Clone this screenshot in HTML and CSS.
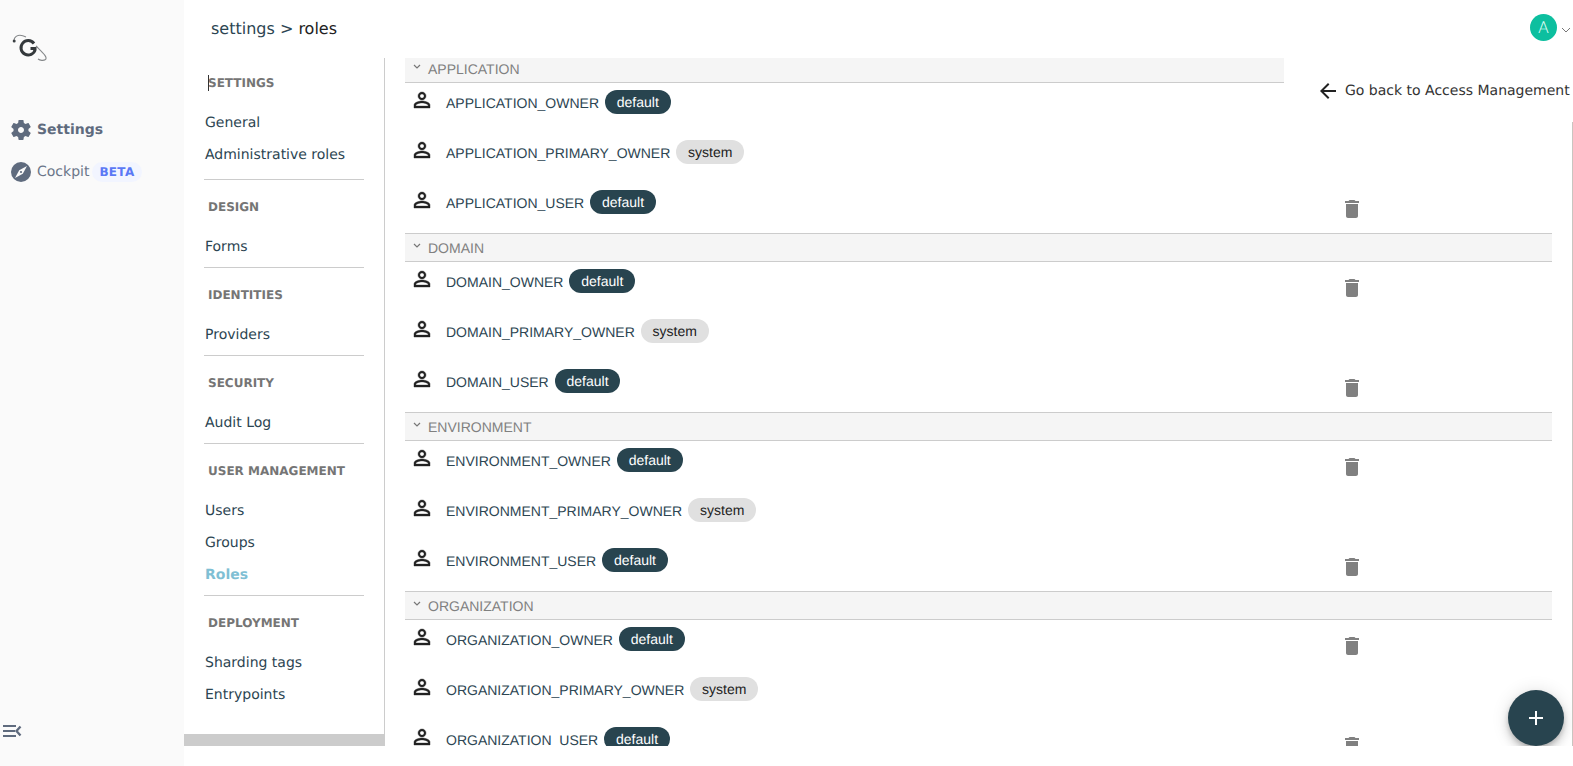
FILE: index.html
```html
<!DOCTYPE html>
<html lang="en">
<head>
<meta charset="utf-8">
<title>settings &gt; roles</title>
<link rel="stylesheet" href="styles.css">
</head>
<body>
<div class="app">
  <aside class="sidebar">
    <a class="logo">
      <svg width="38" height="28" viewBox="0 0 38 28" fill="none">
        <path d="M3 6 C4 1 9 0 15 3 M25 12 C31 18 37 23 34.5 25.5 C32.5 27 29 26.5 27 25" stroke="#85888a" stroke-width="1.1"/>
        <circle cx="3.2" cy="7" r="1.5" fill="#3a3f42"/>
        <path d="M23 9.5 A7.2 7.2 0 1 0 24.2 15.5 M19.5 14.4 H25.5" stroke="#34393c" stroke-width="3"/>
      </svg>
    </a>
    <nav class="side-nav">
      <a class="side-link side-link--active">
        <svg class="side-icon" viewBox="0 0 24 24" fill="#5f6b7e"><path d="M19.43 12.98c.04-.32.07-.64.07-.98s-.03-.66-.07-.98l2.11-1.65c.19-.15.24-.42.12-.64l-2-3.46c-.12-.22-.39-.3-.61-.22l-2.49 1c-.52-.4-1.08-.73-1.69-.98l-.38-2.65C14.46 2.18 14.25 2 14 2h-4c-.25 0-.46.18-.49.42l-.38 2.65c-.61.25-1.17.59-1.69.98l-2.49-1c-.23-.09-.49 0-.61.22l-2 3.46c-.13.22-.07.49.12.64l2.11 1.65c-.04.32-.07.65-.07.98s.03.66.07.98l-2.11 1.65c-.19.15-.24.42-.12.64l2 3.46c.12.22.39.3.61.22l2.49-1c.52.4 1.08.73 1.69.98l.38 2.65c.03.24.24.42.49.42h4c.25 0 .46-.18.49-.42l.38-2.65c.61-.25 1.17-.59 1.69-.98l2.49 1c.23.09.49 0 .61-.22l2-3.46c.12-.22.07-.49-.12-.64l-2.11-1.65zM12 15c-1.66 0-3-1.34-3-3s1.34-3 3-3 3 1.34 3 3-1.34 3-3 3z"/></svg>
        <span>Settings</span>
      </a>
      <a class="side-link">
        <svg class="side-icon" viewBox="0 0 20 20"><circle cx="10" cy="10" r="10" fill="#5f6b7e"/><path d="M16 4 L11.8 11.8 L4 16 L8.2 8.2 Z" fill="#fafafa"/><circle cx="10" cy="10" r="1.1" fill="#5f6b7e"/></svg>
        <span>Cockpit</span>
        <span class="beta">BETA</span>
      </a>
    </nav>
    <button class="collapse" aria-label="Collapse">
      <svg width="20" height="12" viewBox="0 0 20 12" fill="none" stroke="#5f6b7e"><path stroke-width="2" d="M0 1H13M0 6H12M0 11H13"/><path stroke-width="2.3" d="M17.5 1.5L13.5 6L17.5 10.5"/></svg>
    </button>
  </aside>

  <div class="main">
    <header class="topbar">
      <div class="crumbs"><span class="crumb">settings &gt;</span> <span class="crumb-current">roles</span></div>
      <div class="user">
        <span class="avatar">A</span>
        <svg width="10" height="6" viewBox="0 0 10 6" fill="none" stroke="#777" stroke-width="1"><path d="M1 1L5 5L9 1"/></svg>
      </div>
    </header>

    <div class="body">
      <div class="submenu">
        <div class="submenu-list">
          <section class="menu-section menu-section--first">
            <h4 class="menu-title"><span class="caret"></span>SETTINGS</h4>
            <a class="menu-item">General</a>
            <a class="menu-item">Administrative roles</a>
          </section>
          <section class="menu-section">
            <h4 class="menu-title">DESIGN</h4>
            <a class="menu-item">Forms</a>
          </section>
          <section class="menu-section">
            <h4 class="menu-title">IDENTITIES</h4>
            <a class="menu-item">Providers</a>
          </section>
          <section class="menu-section">
            <h4 class="menu-title">SECURITY</h4>
            <a class="menu-item">Audit Log</a>
          </section>
          <section class="menu-section">
            <h4 class="menu-title">USER MANAGEMENT</h4>
            <a class="menu-item">Users</a>
            <a class="menu-item">Groups</a>
            <a class="menu-item menu-item--active">Roles</a>
          </section>
          <section class="menu-section menu-section--last">
            <h4 class="menu-title">DEPLOYMENT</h4>
            <a class="menu-item">Sharding tags</a>
            <a class="menu-item">Entrypoints</a>
          </section>
        </div>
        <div class="hscroll"></div>
      </div>

      <main class="content">
        <div class="roles">
          <a class="back">
            <svg width="24" height="24" viewBox="0 0 24 24" fill="#222"><path d="M20 11H7.83l5.59-5.59L12 4l-8 8 8 8 1.41-1.41L7.83 13H20v-2z"/></svg>
            <span>Go back to Access Management</span>
          </a>

          <section class="group group--first">
            <div class="group-head"><svg class="chev" width="8" height="5" viewBox="0 0 8 5" fill="none" stroke="#777" stroke-width="1.2"><path d="M1 1L4 4L7 1"/></svg>APPLICATION</div>
            <div class="row"><svg class="person" viewBox="0 0 24 24"><use href="#i-person"/></svg><div class="role"><span class="name">APPLICATION_OWNER</span><span class="badge">default</span></div></div>
            <div class="row"><svg class="person" viewBox="0 0 24 24"><use href="#i-person"/></svg><div class="role"><span class="name">APPLICATION_PRIMARY_OWNER</span><span class="badge badge--system">system</span></div></div>
            <div class="row"><svg class="person" viewBox="0 0 24 24"><use href="#i-person"/></svg><div class="role"><span class="name">APPLICATION_USER</span><span class="badge">default</span></div><svg class="trash" viewBox="0 0 24 24"><use href="#i-trash"/></svg></div>
          </section>

          <section class="group">
            <div class="group-head"><svg class="chev" width="8" height="5" viewBox="0 0 8 5" fill="none" stroke="#777" stroke-width="1.2"><path d="M1 1L4 4L7 1"/></svg>DOMAIN</div>
            <div class="row"><svg class="person" viewBox="0 0 24 24"><use href="#i-person"/></svg><div class="role"><span class="name">DOMAIN_OWNER</span><span class="badge">default</span></div><svg class="trash" viewBox="0 0 24 24"><use href="#i-trash"/></svg></div>
            <div class="row"><svg class="person" viewBox="0 0 24 24"><use href="#i-person"/></svg><div class="role"><span class="name">DOMAIN_PRIMARY_OWNER</span><span class="badge badge--system">system</span></div></div>
            <div class="row"><svg class="person" viewBox="0 0 24 24"><use href="#i-person"/></svg><div class="role"><span class="name">DOMAIN_USER</span><span class="badge">default</span></div><svg class="trash" viewBox="0 0 24 24"><use href="#i-trash"/></svg></div>
          </section>

          <section class="group">
            <div class="group-head"><svg class="chev" width="8" height="5" viewBox="0 0 8 5" fill="none" stroke="#777" stroke-width="1.2"><path d="M1 1L4 4L7 1"/></svg>ENVIRONMENT</div>
            <div class="row"><svg class="person" viewBox="0 0 24 24"><use href="#i-person"/></svg><div class="role"><span class="name">ENVIRONMENT_OWNER</span><span class="badge">default</span></div><svg class="trash" viewBox="0 0 24 24"><use href="#i-trash"/></svg></div>
            <div class="row"><svg class="person" viewBox="0 0 24 24"><use href="#i-person"/></svg><div class="role"><span class="name">ENVIRONMENT_PRIMARY_OWNER</span><span class="badge badge--system">system</span></div></div>
            <div class="row"><svg class="person" viewBox="0 0 24 24"><use href="#i-person"/></svg><div class="role"><span class="name">ENVIRONMENT_USER</span><span class="badge">default</span></div><svg class="trash" viewBox="0 0 24 24"><use href="#i-trash"/></svg></div>
          </section>

          <section class="group">
            <div class="group-head"><svg class="chev" width="8" height="5" viewBox="0 0 8 5" fill="none" stroke="#777" stroke-width="1.2"><path d="M1 1L4 4L7 1"/></svg>ORGANIZATION</div>
            <div class="row"><svg class="person" viewBox="0 0 24 24"><use href="#i-person"/></svg><div class="role"><span class="name">ORGANIZATION_OWNER</span><span class="badge">default</span></div><svg class="trash" viewBox="0 0 24 24"><use href="#i-trash"/></svg></div>
            <div class="row"><svg class="person" viewBox="0 0 24 24"><use href="#i-person"/></svg><div class="role"><span class="name">ORGANIZATION_PRIMARY_OWNER</span><span class="badge badge--system">system</span></div></div>
            <div class="row"><svg class="person" viewBox="0 0 24 24"><use href="#i-person"/></svg><div class="role"><span class="name">ORGANIZATION_USER</span><span class="badge">default</span></div><svg class="trash" viewBox="0 0 24 24"><use href="#i-trash"/></svg></div>
          </section>
        </div>
        <button class="fab" aria-label="Add">
          <svg width="24" height="24" viewBox="0 0 24 24" fill="#fff"><path d="M19 13h-6v6h-2v-6H5v-2h6V5h2v6h6v2z"/></svg>
        </button>
      </main>
    </div>
  </div>
</div>

<svg class="defs" width="0" height="0" aria-hidden="true">
  <symbol id="i-person" viewBox="0 0 24 24"><path fill="#222" stroke="#222" stroke-width="0.4" d="M12 5.9c1.16 0 2.1.94 2.1 2.1s-.94 2.1-2.1 2.1S9.9 9.16 9.9 8s.94-2.1 2.1-2.1m0 9c2.97 0 6.1 1.46 6.1 2.1v1.1H5.9V17c0-.64 3.13-2.1 6.1-2.1M12 4C9.79 4 8 5.79 8 8s1.79 4 4 4 4-1.79 4-4-1.79-4-4-4zm0 9c-2.67 0-8 1.34-8 4v3h16v-3c0-2.66-5.33-4-8-4z"/></symbol>
  <symbol id="i-trash" viewBox="0 0 24 24"><path fill="#808080" d="M6 19c0 1.1.9 2 2 2h8c1.1 0 2-.9 2-2V7H6v12zM19 4h-3.5l-1-1h-5l-1 1H5v2h14V4z"/></symbol>
</svg>
</body>
</html>
```
FILE: styles.css
```css
* { box-sizing: border-box; }
html, body { margin: 0; height: 100%; overflow: hidden; background: #fff; }
body { font-family: "DejaVu Sans", sans-serif; font-size: 14px; color: #222; text-rendering: geometricPrecision; }
.defs { position: absolute; }
.app { display: flex; height: 766px; }

/* left rail */
.sidebar { width: 184px; flex: none; background: #fafafa; display: flex; flex-direction: column; padding-top: 34px; }
.logo { display: block; padding-left: 11px; height: 28px; }
.side-nav { display: flex; flex-direction: column; margin-top: 53px; padding-left: 11px; }
.side-link { display: flex; align-items: center; height: 30px; margin-bottom: 12px; color: #6b7689; }
.side-link--active { color: #5f6b7e; font-weight: 700; }
.side-icon { width: 20px; height: 20px; margin-right: 6px; flex: none; }
.side-link--active .side-icon { width: 24px; height: 24px; margin: 0 4px 0 -2px; }
.beta { margin-left: 3px; padding: 0 7px; height: 20px; line-height: 20px; border-radius: 10px; background: #f2f5ff; color: #5a78f5; font-size: 12px; font-weight: 700; letter-spacing: .3px; }
.collapse { margin-top: auto; margin-bottom: 29px; padding: 0 0 0 3px; border: 0; background: none; text-align: left; height: 12px; line-height: 0; }

/* header */
.main { flex: 1; min-width: 0; display: flex; flex-direction: column; padding-bottom: 20px; }
.topbar { height: 58px; flex: none; display: flex; align-items: center; justify-content: space-between; padding: 0 2px 2px 27px; }
.crumbs { font-size: 16px; color: #222; }
.crumb { color: #2c4552; }
.user { display: flex; align-items: center; gap: 4px; margin-top: -2px; }
.avatar { width: 27px; height: 27px; border-radius: 50%; background: #0dbf9f; color: #e6fff9; display: flex; align-items: center; justify-content: center; font-size: 16px; font-weight: 300; }
.user svg { margin-top: 6px; }

/* body */
.body { flex: 1; min-height: 0; display: flex; }
.submenu { width: 201px; flex: none; border-right: 1px solid #ccc; display: flex; flex-direction: column; }
.submenu-list { flex: 1; min-height: 0; overflow: hidden; padding: 0 20px; }
.hscroll { height: 12px; background: #ccc; flex: none; }
.menu-section { border-bottom: 1px solid #ccc; padding: 7px 0 4px; }
.menu-section--first { padding: 5px 0 8px; }
.menu-section--last { border-bottom: 0; }
.menu-title { position: relative; margin: 0 0 4px; padding: 0 0 0 4px; height: 40px; line-height: 40px; font-size: 12px; font-weight: 700; color: #757575; }
.caret { position: absolute; left: 4px; top: 12px; height: 16px; border-left: 1px solid #333; }
.menu-item { display: block; height: 32px; line-height: 32px; padding-left: 1px; color: #2c4552; }
.menu-item--active { color: #7fbfd4; font-weight: 700; }

/* content */
.content { position: relative; flex: 1; min-width: 0; overflow: hidden; padding: 0 21px 0 20px; }
.content::after { content: ""; position: absolute; right: 0; top: 64px; bottom: 0; width: 1px; background: #c9c5c0; }
.roles { margin-top: -4px; }
.back { float: right; width: 289px; height: 68px; margin-right: -21px; padding: 25px 0 0 32px; display: flex; align-items: flex-start; color: #333; font-size: 14px; }
.back svg { flex: none; margin-right: 5px; }
.back span { margin-top: 4px; white-space: nowrap; }
.group-head { overflow: hidden; height: 29px; line-height: 28px; background: #f5f5f5; border-top: 1px solid #ccc; border-bottom: 1px solid #ccc; color: #808080; font-family: "Liberation Sans", sans-serif; font-size: 14px; padding-left: 23px; position: relative; }
.chev { position: absolute; left: 8px; top: 9px; }
.row { display: grid; grid-template-columns: 24px 1fr 212px; column-gap: 12px; height: 50px; padding-left: 5px; align-items: start; }
.person { width: 24px; height: 24px; margin-top: 5px; }
.role { display: flex; align-items: center; margin-top: 7px; height: 24px; font-family: "Liberation Sans", sans-serif; font-size: 14px; white-space: nowrap; }
.name { color: #2c4552; margin-right: 6px; padding-top: 2px; }
.badge { height: 24px; line-height: 24px; padding: 0 11.8px; border-radius: 12px; background: #28444f; color: #fff; }
.badge--system { background: #e0e0e0; color: #222; }
.trash { width: 24px; height: 24px; margin-top: 14px; }
.fab { position: absolute; right: 9px; bottom: 0; width: 56px; height: 56px; border: 0; padding: 0; border-radius: 50%; background: #28444f; display: flex; align-items: center; justify-content: center; box-shadow: 0 3px 5px -1px rgba(0,0,0,.2), 0 6px 10px 0 rgba(0,0,0,.14), 0 1px 18px 0 rgba(0,0,0,.12); }
```
